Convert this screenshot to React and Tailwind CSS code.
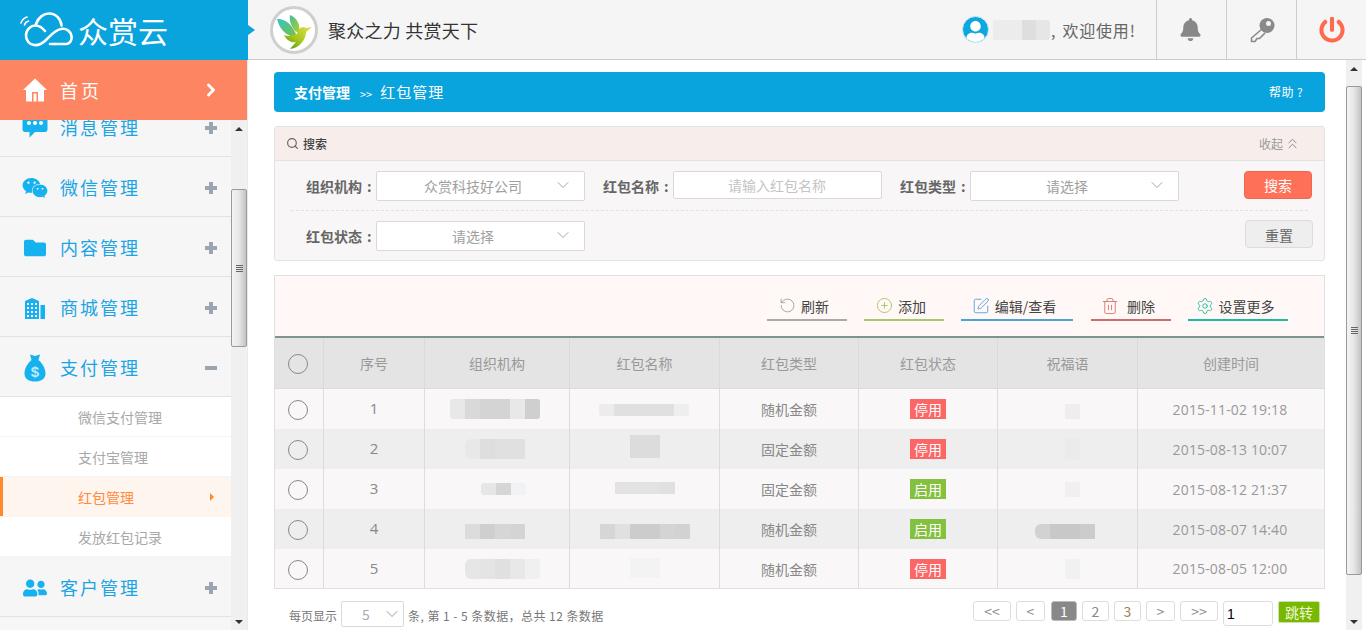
import React from "react";
import { FaWeixin, FaFolder, FaUserFriends, FaBell, FaPowerOff, FaUser } from "react-icons/fa";
import { ChevronDown, ChevronRight, ChevronsUp, RotateCw, CirclePlus, SquarePen, Trash2, Settings, Search } from "lucide-react";

const cn = "font-['Noto_Sans_CJK_SC','Liberation_Sans',sans-serif]";

function Patch({ cells, h = 20, dx = 0, dy = 0, w = 15, round = "rounded-[3px]" }) {
  return (
    <span className={"inline-flex overflow-hidden " + round} style={{ height: h, transform: `translate(${dx}px,${dy}px)` }}>
      {cells.map((c, i) => (
        <span key={i} style={{ width: w, height: h, background: c }} />
      ))}
    </span>
  );
}

function CloudLogo() {
  return (
    <svg width="54" height="36" viewBox="0 0 54 36" fill="none" stroke="white" strokeWidth="2.6" strokeLinecap="round">
      <path d="M2 11 C3 8 5 6 8 5" strokeWidth="1.6" />
      <path d="M5.5 13 C6 11 7.5 9.5 9.5 9" strokeWidth="1.6" />
      <path d="M17 12 C19.5 5 25 1.5 30 1.5 C37 1.5 42 7 42.5 13.5" />
      <path d="M36 32 L47 32 C51 32 53 28 52.5 24.5 C52 19 47 16 42 17 C36 18 32 23 27 28 C23 32 19 33.5 15 33 C10 32.5 7 28 7 23.5 C7 17.5 12 13 17 13.5 C21 14 24 16.5 26 19" />
      <path d="M36 32 L31 32" />
    </svg>
  );
}

function Bird() {
  return (
    <svg width="48" height="48" viewBox="0 0 48 48">
      <defs>
        <linearGradient id="bw1" x1="0" y1="0" x2="1" y2="1">
          <stop offset="0" stopColor="#35c4cf" />
          <stop offset="1" stopColor="#7dbf3a" />
        </linearGradient>
        <linearGradient id="bw2" x1="0" y1="0" x2="1" y2="1">
          <stop offset="0" stopColor="#3fbfa0" />
          <stop offset="1" stopColor="#b5cf22" />
        </linearGradient>
        <linearGradient id="bb" x1="1" y1="0" x2="0" y2="1">
          <stop offset="0" stopColor="#dfe04a" />
          <stop offset="0.55" stopColor="#a6c61c" />
          <stop offset="1" stopColor="#4d8a12" />
        </linearGradient>
      </defs>
      <circle cx="24" cy="24" r="22.5" fill="#fff" stroke="#cfcfcf" strokeWidth="3" />
      <path d="M7 13 C14 12 23 18 27 31 C18 31 10 25 7 13Z" fill="url(#bw1)" />
      <path d="M20 9 C26 11 31 18 29 27 L25 25 C21 20 19 14 20 9Z" fill="url(#bw2)" />
      <path d="M42 21 L36 22 C32 19 28 23 27 28 C21 30 18 31 14 29 C17 35 22 37 26 36 L20 43 C30 42 36 33 36 26 Z" fill="url(#bb)" />
    </svg>
  );
}

function HomeIcon() {
  return (
    <svg width="26" height="26" viewBox="0 0 26 26" fill="white">
      <path d="M13 1.5 L25 13 L22 13 L22 24.5 L16 24.5 L16 15 L10 15 L10 24.5 L4 24.5 L4 13 L1 13 Z" />
      <rect x="11.5" y="16.5" width="3" height="8" />
    </svg>
  );
}

function ChatIcon() {
  return (
    <svg width="26" height="24" viewBox="0 0 26 24" fill="#15b2ef">
      <path d="M3 0 H23 Q25.500 0 25.500 3 V13 Q25.500 16 23 16 H13 L7.500 21.500 V16 H3 Q0.500 16 0.500 13 V3 Q0.500 0 3 0Z" />
      <circle cx="7" cy="7" r="2" fill="#fff" />
      <circle cx="13" cy="7" r="2" fill="#fff" />
      <circle cx="19" cy="7" r="2" fill="#fff" />
    </svg>
  );
}

function BuildingIcon() {
  return (
    <svg width="22" height="22" viewBox="0 0 22 22" fill="#15b2ef" className="ml-[2px]">
      <path d="M1 4 L8 1 L15 4 V22 H1 Z" />
      <rect x="16.500" y="8" width="4.500" height="14" />
      {[6, 10, 14, 18].map((y) =>
        [3, 7, 11].map((x) => <rect key={x + "-" + y} x={x} y={y} width="2" height="2" fill="#fff" />)
      )}
    </svg>
  );
}

function BagIcon() {
  return (
    <svg width="22" height="28" viewBox="0 0 22 28" className="ml-[2px]">
      <path d="M6 0.500 L11 2 L16 0.500 L14.500 6 C18 9 21.500 14 21.500 19.500 C21.500 25 17 27.500 11 27.500 C5 27.500 0.500 25 0.500 19.500 C0.500 14 4 9 7.500 6 Z" fill="#15b2ef" />
      <text x="11" y="23" textAnchor="middle" fontSize="15" fontWeight="700" fontFamily="Liberation Sans" fill="#bfeafb">$</text>
    </svg>
  );
}

function KeyIcon() {
  return (
    <svg width="28" height="28" viewBox="0 0 28 28" fill="none">
      <path d="M14 13 L3.500 22 L3.500 25.500 L7 25.500 L9 22.500 L11.500 22.500 L17 17" stroke="#8a8a8a" strokeWidth="1.6" strokeLinejoin="round" />
      <circle cx="19" cy="9.500" r="7.500" fill="#8a8a8a" />
      <circle cx="20.500" cy="7.500" r="2.500" fill="#f5f5f5" />
    </svg>
  );
}

function Plus() {
  return (
    <span className="relative block w-3 h-3">
      <span className="absolute left-0 right-0 top-1 h-1 bg-[#9aa5b1]" />
      <span className="absolute top-0 bottom-0 left-1 w-1 bg-[#9aa5b1]" />
    </span>
  );
}

function Minus() {
  return <span className="block w-3 h-1 bg-[#9aa5b1]" />;
}

function MenuRow({ icon, label, open }) {
  return (
    <div className="h-[60px] shrink-0 flex items-center pt-[2px] bg-[#f6f6f6] border-b border-[#e2e2e2]">
      <span className="w-[60px] pl-[22px] flex items-center shrink-0">{icon}</span>
      <span className="flex-1 text-[18px] tracking-[2px] text-[#1ba4e4]">{label}</span>
      <span className="w-[26px] shrink-0">{open ? <Minus /> : <Plus />}</span>
    </div>
  );
}

function SubRow({ label, active }) {
  return (
    <div
      className={
        "h-10 shrink-0 flex items-center pl-[78px] text-sm border-b " +
        (active ? "relative bg-[#fff5ef] text-[#ff8a3c] border-[#fff5ef]" : "bg-white text-[#a8a8a8] border-[#f4f4f4]")
      }
    >
      {active && <span className="absolute left-0 top-0 bottom-0 w-[3px] bg-[#ff8a2e]" />}
      <span className="flex-1">{label}</span>
      {active && <span className="mr-[17px] w-0 h-0 border-y-4 border-y-transparent border-l-[4px] border-l-[#ff8a2e]" />}
    </div>
  );
}

function ScrollArrow({ up }) {
  return (
    <span className="h-[17px] shrink-0 flex items-center justify-center">
      <span
        className={
          "w-0 h-0 border-x-[4px] border-x-transparent " +
          (up ? "border-b-[4px] border-b-[#333]" : "border-t-[4px] border-t-[#333]")
        }
      />
    </span>
  );
}

function Scrollbar({ before, thumb }) {
  return (
    <div className="w-4 shrink-0 flex flex-col bg-[#f0f0f0]">
      <ScrollArrow up />
      <div style={{ height: before }} className="shrink-0" />
      <div
        style={{ height: thumb }}
        className="shrink-0 rounded-[2px] border border-[#9a9a9a] bg-gradient-to-r from-[#f4f4f4] via-[#e6e6e6] to-[#c4c4c4] flex flex-col items-center justify-center gap-[1px]"
      >
        <span className="w-[7px] h-px bg-[#666]" />
        <span className="w-[7px] h-px bg-[#666]" />
        <span className="w-[7px] h-px bg-[#666]" />
        <span className="w-[7px] h-px bg-[#666]" />
      </div>
      <div className="flex-1" />
      <ScrollArrow />
    </div>
  );
}

function Field({ label, children, cls }) {
  return (
    <div className={"flex items-center " + cls}>
      <label className="w-[70px] shrink-0 font-bold text-sm text-[#666] whitespace-nowrap">{label}<span className="ml-[5px]">:</span></label>
      {children}
    </div>
  );
}

function SelectBox({ text, tx = "pl-[47px]" }) {
  return (
    <div className={"w-[209px] h-[30px] rounded-[2px] border border-[#d9d9d9] bg-white flex items-center text-sm text-[#a0a0a0] " + tx}>
      <span className="flex-1">{text}</span>
      <ChevronDown size={20} strokeWidth={0.9} className="mr-[11px] mb-[2px] text-[#888]" />
    </div>
  );
}

function ToolBtn({ icon, label, cls }) {
  return (
    <button className={"flex items-center justify-center gap-[5px] h-[27px] pb-[2px] pr-[6px] border-b-2 text-sm text-[#444] " + cls}>
      {icon}
      <span>{label}</span>
    </button>
  );
}

function PageBtn({ children, cls }) {
  return (
    <button className={"h-5 rounded-[3px] border text-sm flex items-center justify-center " + cls}>{children}</button>
  );
}

const colCls = "grid grid-cols-[49px_101px_145px_150px_139px_139px_140px_1fr]";

const rows = [
  {
    n: 1, org: { cells: ["#e8e8e8", "#d9d9d9", "#d4d4d4", "#d4d4d4", "#e8e8e8", "#cfcfcf"], h: 20, dx: -2 },
    name: { cells: ["#ececec", "#e0e0e0", "#e0e0e0", "#e0e0e0", "#e0e0e0", "#eeeeee"], h: 12, dx: -1, dy: 1 },
    type: "随机金额", on: false, bless: { cells: ["#eeedf0"], h: 15, dx: 5, dy: 2, round: "rounded-none" }, time: "2015-11-02 19:18",
  },
  {
    n: 2, org: { cells: ["#e8e8e8", "#dedede", "#e0e0e0", "#e0e0e0"], h: 20, dx: -2, round: "rounded-l-md" },
    name: { cells: ["#dcdcdc", "#dcdcdc"], h: 23, dx: 0, dy: -3, round: "rounded-none" },
    type: "固定金额", on: false, bless: { cells: ["#ebebeb"], h: 22, dx: 5, round: "rounded-none" }, time: "2015-08-13 10:07",
  },
  {
    n: 3, org: { cells: ["#e6e6e6", "#d6d6d6", "#f2f2f4"], h: 12, dx: 6 },
    name: { cells: ["#e2e2e2", "#e2e2e2", "#e2e2e2", "#e0e0e0"], h: 12, dy: -1, round: "rounded-none" },
    type: "固定金额", on: true, bless: { cells: ["#f0eff1"], h: 15, dx: 5, round: "rounded-none" }, time: "2015-08-12 21:37",
  },
  {
    n: 4, org: { cells: ["#dcdcdc", "#cfcfcf", "#d6d6d6", "#d4d4d4"], h: 15, dx: -2, dy: 2, round: "rounded-none" },
    name: { cells: ["#d6d6d6", "#e0e0e0", "#cccccc", "#cccccc", "#d4d4d4", "#d2d2d2"], h: 15, dy: 2, dx: 0, round: "rounded-none" },
    type: "随机金额", on: true, bless: { cells: ["#d2d2d2", "#c8c8c8", "#c8c8c8", "#cccccc"], h: 15, dx: -3, dy: 2, round: "rounded-l-md" }, time: "2015-08-07 14:40",
  },
  {
    n: 5, org: { cells: ["#e6e6e6", "#e4e4e4", "#e0e0e0", "#e8e8e8", "#f0f0f0"], h: 20, dx: 5, round: "rounded-l-md" },
    name: { cells: ["#f3f3f4", "#f3f3f4"], h: 20, dy: -1, round: "rounded-none" },
    type: "随机金额", on: false, bless: { cells: ["#f1f1f2"], h: 20, dx: 5, round: "rounded-none" }, time: "2015-08-05 12:00",
  },
];

const Radio = ({ cls = "" }) => <span className={"w-5 h-5 mr-[2px] rounded-full border border-[#888] " + cls} />;

export default function App() {
  return (
    <div className={"h-screen w-full overflow-hidden flex flex-col bg-white " + cn}>
      {/* top bar */}
      <header className="h-[60px] shrink-0 flex">
        <div className="relative w-[248px] shrink-0 bg-[#09a3de] flex items-center pl-[19px] gap-[5px]">
          <CloudLogo />
          <span className="text-[30px] leading-none text-white">众赏云</span>
          <span className="absolute left-full top-[25px] w-0 h-0 border-y-[5px] border-y-transparent border-l-[7px] border-l-[#09a3de] z-10" />
        </div>
        <div className="flex-1 bg-[#f5f5f5] border-b border-[#ccc] flex items-center pl-[22px]">
          <Bird />
          <span className="ml-[10px] text-[18px] tracking-[0.25px] text-[#333] mt-[2px]">聚众之力 共赏天下</span>
          <div className="flex-1" />
          <span className="w-[27px] h-[27px] rounded-full bg-[#0ca6e0] flex items-end justify-center overflow-hidden border border-[#cde9f5]">
            <FaUser size={21} className="text-white" />
          </span>
          <span className="ml-[4px] flex">
            <Patch cells={["#ececec", "#ececec", "#dedede", "#e6e6e6"]} h={20} w={14.25} />
          </span>
          <span className="ml-[1px] w-[105px] text-base text-[#666] whitespace-nowrap">
            ,<span className="ml-[7px] tracking-[0.8px]">欢迎使用!</span>
          </span>
          <span className="w-[70px] h-full border-l border-[#ccc] flex items-center justify-center">
            <FaBell size={23} className="text-[#888] mr-[3px]" />
          </span>
          <span className="w-[70px] h-full border-l border-[#ccc] flex items-center justify-center">
            <KeyIcon />
          </span>
          <span className="w-[70px] h-full border-l border-[#ccc] flex items-center justify-center">
            <FaPowerOff size={26} className="text-[#ff6a4d]" />
          </span>
        </div>
      </header>

      <div className="flex-1 min-h-0 flex">
        {/* sidebar */}
        <aside className="w-[248px] shrink-0 flex flex-col border-r border-[#eaeaea]">
          <div className="h-[60px] shrink-0 bg-[#fe8562] flex items-center text-white">
            <span className="w-[60px] pl-[22px] shrink-0 flex items-center"><HomeIcon /></span>
            <span className="flex-1 text-[18px] tracking-[3px]">首页</span>
            <ChevronRight size={20} strokeWidth={3.500} className="mr-[26px]" />
          </div>
          <div className="flex-1 min-h-0 flex">
            <div className="flex-1 min-w-0 overflow-hidden bg-[#f6f6f6]">
              <div className="-mt-[23px] flex flex-col">
                <MenuRow icon={<ChatIcon />} label="消息管理" />
                <MenuRow icon={<FaWeixin size={26} className="text-[#15b2ef]" />} label="微信管理" />
                <MenuRow icon={<FaFolder size={22} className="text-[#15b2ef] ml-[2px]" />} label="内容管理" />
                <MenuRow icon={<BuildingIcon />} label="商城管理" />
                <MenuRow icon={<BagIcon />} label="支付管理" open />
                <SubRow label="微信支付管理" />
                <SubRow label="支付宝管理" />
                <SubRow label="红包管理" active />
                <SubRow label="发放红包记录" />
                <MenuRow icon={<FaUserFriends size={24} className="text-[#15b2ef] ml-[1px]" />} label="客户管理" />
              </div>
            </div>
            <Scrollbar before={52} thumb={158} />
          </div>
        </aside>

        {/* main */}
        <main className="flex-1 min-w-0 flex overflow-hidden">
          <div className="flex-1 min-w-0 pt-3 pl-[26px] pr-[21px] flex flex-col">
            <div className="h-10 shrink-0 rounded bg-[#09a3de] flex items-center pl-5 pr-[21px] text-white">
              <span className="text-sm font-bold">支付管理</span>
              <span className="ml-[10px] mt-1 text-[11px]">&gt;&gt;</span>
              <span className="ml-[8px] text-[15px] tracking-[1px]">红包管理</span>
              <span className="ml-auto mr-px text-xs tracking-[0.4px]">帮助 ?</span>
            </div>

            {/* search */}
            <section className="mt-[14px] shrink-0 h-[135px] rounded-[3px] border border-[#e2e2e2] bg-[#f8f6f7] flex flex-col overflow-hidden">
              <div className="h-[34px] shrink-0 bg-[#f7eeeb] border-b border-[#e2e2e2] flex items-center pl-[11px] pr-[25px]">
                <Search size={13} strokeWidth={2.2} className="text-[#666]" />
                <span className="ml-[4px] text-xs text-[#444] font-medium">搜索</span>
                <span className="ml-auto mr-[-1px] text-xs text-[#999]">收起</span>
                <ChevronsUp size={17} strokeWidth={1.4} className="ml-[2px] -mr-[2px] text-[#888]" />
              </div>
              <div className="flex-1 px-[16px] flex flex-col">
                <div className="h-[50px] shrink-0 border-b border-dashed border-[#e2e2e2] flex items-start pt-[10px] pl-[15px]">
                  <Field label="组织机构" cls="">
                    <SelectBox text="众赏科技好公司" />
                  </Field>
                  <Field label="红包名称" cls="ml-[18px] h-[30px]">
                    <div className="w-[209px] h-7 -mt-[2px] rounded-[2px] border border-[#d9d9d9] bg-white flex items-center pl-[54px] text-sm text-[#c4c4c4]">请输入红包名称</div>
                  </Field>
                  <Field label="红包类型" cls="ml-[18px]">
                    <SelectBox text="请选择" tx="pl-[75px]" />
                  </Field>
                  <button className="ml-auto -mr-[4px] w-[68px] h-7 rounded bg-[#ff7058] border border-[#f0674f] text-sm text-white">搜索</button>
                </div>
                <div className="flex-1 flex items-start pt-[10px] pl-[15px]">
                  <Field label="红包状态" cls="">
                    <SelectBox text="请选择" tx="pl-[75px]" />
                  </Field>
                  <button className="ml-auto -mr-[5px] -mt-[1px] w-[68px] h-7 pt-[2px] rounded border border-[#dcdcdc] bg-[#eeeeee] text-sm text-[#666]">重置</button>
                </div>
              </div>
            </section>

            {/* table panel */}
            <section className="mt-[14px] shrink-0 border border-[#e0e0e0]">
              <div className="h-[62px] bg-[#fff8f7] border-b-2 border-[#7d9490] flex items-start pt-[18px] pl-[492px] gap-[17px]">
                <ToolBtn cls="w-20 border-[#aaaaaa]" label="刷新" icon={<RotateCw size={17} strokeWidth={1} className="text-[#888] -scale-x-100" />} />
                <ToolBtn cls="w-20 border-[#a5c96a]" label="添加" icon={<CirclePlus size={17} strokeWidth={1} className="text-[#8cb83f]" />} />
                <ToolBtn cls="w-[112px] border-[#4da3d8]" label="编辑/查看" icon={<SquarePen size={18} strokeWidth={1.2} className="text-[#4da3d8]" />} />
                <ToolBtn cls="w-20 ml-px border-[#cc6e66]" label="删除" icon={<Trash2 size={18} strokeWidth={1.2} className="text-[#d9736a] mr-[3px]" />} />
                <ToolBtn cls="w-[100px] border-[#1abc9c]" label="设置更多" icon={<Settings size={18} strokeWidth={1.2} className="text-[#1abc9c]" />} />
              </div>
              <div className={colCls + " h-[51px] bg-[#e4e4e4] border-b border-[#dcdcdc] text-sm text-[#999]"}>
                {["", "序号", "组织机构", "红包名称", "红包类型", "红包状态", "祝福语", "创建时间"].map((t, i) => (
                  <div key={i} className={"flex items-center justify-center " + (i < 7 ? "border-r border-[#dadada]" : "")}>
                    {i === 0 ? <Radio cls="mt-[1px]" /> : t}
                  </div>
                ))}
              </div>
              {rows.map((r) => (
                <div key={r.n} className={colCls + " text-sm text-[#888] " + (r.n === 5 ? "h-[39px] " : "h-10 ") + (r.n % 2 ? "bg-[#f9f7f8]" : "bg-[#eeeeee]")}>
                  <div className="flex items-center justify-center border-r border-[#dcdcdc]"><Radio cls={r.n === 5 ? "mt-[2px]" : "mt-[1px]"} /></div>
                  <div className="flex items-center justify-center border-r border-[#dcdcdc] font-['Open_Sans',sans-serif] text-[15px]">{r.n}</div>
                  <div className="flex items-center justify-center border-r border-[#dcdcdc]"><Patch {...r.org} /></div>
                  <div className="flex items-center justify-center border-r border-[#dcdcdc]"><Patch {...r.name} /></div>
                  <div className="flex items-center justify-center border-r border-[#dcdcdc]">{r.type}</div>
                  <div className="flex items-center justify-center border-r border-[#dcdcdc]">
                    <span className={"w-9 h-5 flex items-center justify-center text-sm text-white " + (r.on ? "bg-[#83c13e]" : "bg-[#fb6767]")}>{r.on ? "启用" : "停用"}</span>
                  </div>
                  <div className="flex items-center justify-center border-r border-[#dcdcdc]"><Patch {...r.bless} /></div>
                  <div className="flex items-center justify-center pt-px pr-[2px] font-['Open_Sans',sans-serif] tracking-[0.15px] text-[#999]">{r.time}</div>
                </div>
              ))}
            </section>

            {/* pagination */}
            <div className="mt-[12px] shrink-0 flex items-start pl-[15px] pr-[5px] text-xs text-[#777]">
              <span className="mt-[7px]">每页显示</span>
              <div className="ml-1 w-[63px] h-[26px] rounded-[2px] border border-[#d9d9d9] flex items-center pl-[20px] text-sm text-[#aaa]">
                <span className="flex-1">5</span>
                <ChevronDown size={20} strokeWidth={0.9} className="mr-[1px] text-[#777]" />
              </div>
              <span className="ml-1 mt-[7px] tracking-[0.45px] whitespace-nowrap">条, 第 1 - 5 条数据，总共 12 条数据</span>
              <div className="ml-auto flex items-start gap-[5px]">
                <PageBtn cls="w-[38px] text-[#888] bg-white border-[#ddd]">&lt;&lt;</PageBtn>
                <PageBtn cls="w-[29px] text-[#888] bg-white border-[#ddd]">&lt;</PageBtn>
                <PageBtn cls="w-[26px] ml-px text-white bg-[#888] border-[#bbb]">1</PageBtn>
                <PageBtn cls="w-[27px] text-[#888] bg-white border-[#ddd]">2</PageBtn>
                <PageBtn cls="w-[27px] text-[#a08050] bg-white border-[#ddd]">3</PageBtn>
                <PageBtn cls="w-[29px] text-[#888] bg-white border-[#ddd]">&gt;</PageBtn>
                <PageBtn cls="w-[38px] text-[#888] bg-white border-[#ddd]">&gt;&gt;</PageBtn>
                <div className="w-[50px] h-[25px] rounded-[3px] border border-[#ddd] bg-white flex items-center pl-[3px] text-sm text-black font-['Liberation_Sans',sans-serif]">1</div>
                <button className="w-[42px] h-[22px] rounded-[2px] border border-[#cde0a8] bg-[#76b900] text-sm text-[#f2f8d8] flex items-center justify-center">跳转</button>
              </div>
            </div>
          </div>
          <Scrollbar before={9} thumb={489} />
          <div className="w-1 shrink-0" />
        </main>
      </div>
    </div>
  );
}
